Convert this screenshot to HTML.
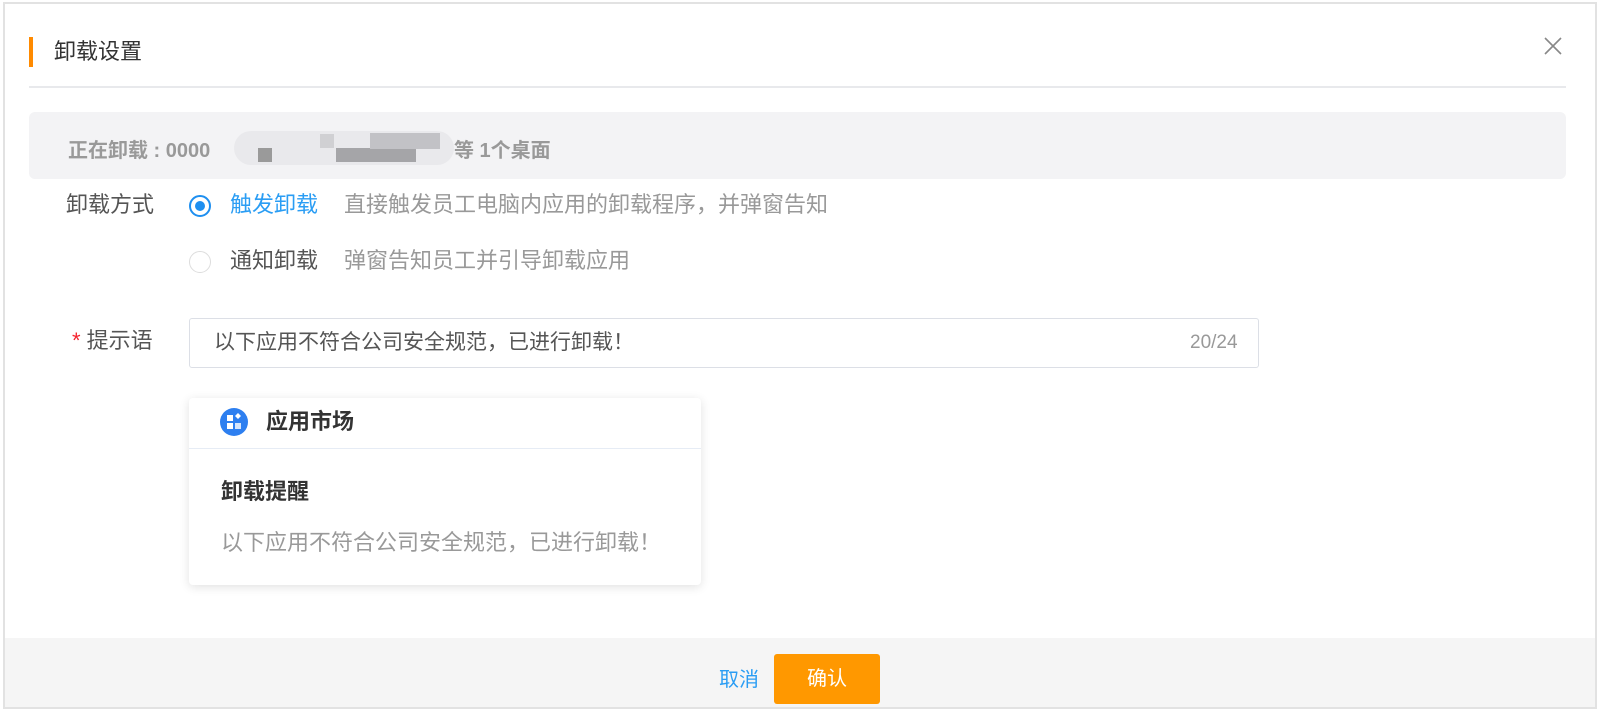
<!DOCTYPE html>
<html><head><meta charset="utf-8"><style>
*{margin:0;padding:0;box-sizing:border-box}
body{width:1600px;height:711px;background:#fff;font-family:"Liberation Sans","Noto Sans CJK SC",sans-serif;position:relative;overflow:hidden}
.a{position:absolute;white-space:nowrap}
.dlg{position:absolute;left:3px;top:2px;width:1594px;height:707px;border:2px solid #e2e2e2;background:#fff}
</style></head><body>
<div class="dlg"></div>
<div class="a" style="left:29px;top:37px;width:4px;height:30px;background:#ff8a00"></div>
<div class="a" style="left:54px;top:38px;font-size:22px;line-height:28px;color:#333">卸载设置</div>
<svg class="a" style="left:1543px;top:36px" width="20" height="20" viewBox="0 0 20 20"><path d="M2 2L18 18M18 2L2 18" stroke="#888" stroke-width="1.6"/></svg>
<div class="a" style="left:29px;top:86px;width:1537px;height:2px;background:#e8e9ec"></div>
<div class="a" style="left:29px;top:112px;width:1537px;height:67px;background:#f3f3f5;border-radius:6px"></div>
<div class="a" style="left:68px;top:137px;font-size:20px;line-height:28px;color:#999;font-weight:bold">正在卸载 : 0000</div>
<div class="a" style="left:234px;top:131px;width:220px;height:34px;border-radius:17px;background:#e9e9ec"></div>
<div class="a" style="left:258px;top:148px;width:14px;height:14px;background:#9a9a9a"></div>
<div class="a" style="left:320px;top:134px;width:14px;height:14px;background:#d0d0d3"></div>
<div class="a" style="left:336px;top:148px;width:80px;height:14px;background:#a5a5a8"></div>
<div class="a" style="left:370px;top:133px;width:70px;height:16px;background:#c2c2c6"></div>
<div class="a" style="left:454px;top:137px;font-size:20px;line-height:28px;color:#999;font-weight:bold">等 1个桌面</div>
<div class="a" style="left:66px;top:191px;font-size:22px;line-height:28px;color:#555">卸载方式</div>
<div class="a" style="left:189px;top:195px;width:22px;height:22px;border-radius:50%;border:2px solid #1e8ff0;background:#fff"></div>
<div class="a" style="left:195px;top:201px;width:10px;height:10px;border-radius:50%;background:#1e8ff0"></div>
<div class="a" style="left:230px;top:191px;font-size:22px;line-height:28px;color:#2a9df4">触发卸载</div>
<div class="a" style="left:344px;top:191px;font-size:22px;line-height:28px;color:#999">直接触发员工电脑内应用的卸载程序，并弹窗告知</div>
<div class="a" style="left:189px;top:251px;width:22px;height:22px;border-radius:50%;border:1.5px solid #ddd;background:#fff"></div>
<div class="a" style="left:230px;top:247px;font-size:22px;line-height:28px;color:#555">通知卸载</div>
<div class="a" style="left:344px;top:247px;font-size:22px;line-height:28px;color:#999">弹窗告知员工并引导卸载应用</div>
<div class="a" style="left:72px;top:327px;font-size:22px;line-height:28px;color:#555"><span style="color:#f5222d">*</span> 提示语</div>
<div class="a" style="left:189px;top:318px;width:1070px;height:50px;border:1.5px solid #dcdfe6;border-radius:3px"></div>
<div class="a" style="left:214px;top:329px;font-size:21px;line-height:28px;color:#555">以下应用不符合公司安全规范，已进行卸载！</div>
<div class="a" style="left:1190px;top:329px;font-size:19px;line-height:28px;color:#999">20/24</div>
<div class="a" style="left:189px;top:398px;width:512px;height:187px;background:#fff;border-radius:4px;box-shadow:0 2px 10px rgba(0,0,0,.12)"></div>
<div class="a" style="left:189px;top:448px;width:512px;height:1px;background:#e6ecf5"></div>
<svg class="a" style="left:219px;top:407px" width="30" height="30" viewBox="0 0 30 30"><circle cx="15" cy="15" r="14" fill="#2d7ff0"/><rect x="8" y="8" width="6" height="6" fill="#fff"/><rect x="8" y="16" width="6" height="6" fill="#fff"/><rect x="16" y="16" width="6" height="6" fill="#fff" opacity=".8"/><path d="M19 6l3 3-3 3-3-3z" fill="#fff"/></svg>
<div class="a" style="left:266px;top:408px;font-size:22px;line-height:28px;color:#333;font-weight:bold">应用市场</div>
<div class="a" style="left:221px;top:478px;font-size:22px;line-height:28px;color:#333;font-weight:bold">卸载提醒</div>
<div class="a" style="left:221px;top:529px;font-size:22px;line-height:28px;color:#999">以下应用不符合公司安全规范，已进行卸载！</div>
<div class="a" style="left:5px;top:638px;width:1590px;height:69px;background:#f5f5f5"></div>
<div class="a" style="left:719px;top:666px;font-size:20px;line-height:28px;color:#2a9df4">取消</div>
<div class="a" style="left:774px;top:654px;width:106px;height:50px;background:#ff9800;border-radius:3px;color:#fff;font-size:20px;line-height:50px;text-align:center">确认</div>
</body></html>
